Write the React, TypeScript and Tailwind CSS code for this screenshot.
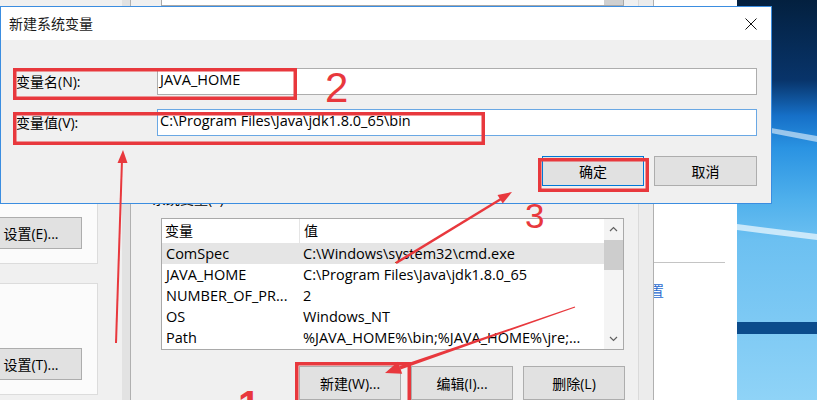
import React from "react";

const RED = "#e8383d";

const rows: { name: string; value: string; selected?: boolean }[] = [
	{ name: "ComSpec", value: "C:\\Windows\\system32\\cmd.exe", selected: true },
	{ name: "JAVA_HOME", value: "C:\\Program Files\\Java\\jdk1.8.0_65" },
	{ name: "NUMBER_OF_PR...", value: "2" },
	{ name: "OS", value: "Windows_NT" },
	{ name: "Path", value: "%JAVA_HOME%\\bin;%JAVA_HOME%\\jre;..." },
];

const WinButton: React.FC<{ label: string; className?: string }> = ({ label, className = "" }) => (
	<div
		className={`flex items-center justify-center border border-[#adadad] bg-[#e1e1e1] text-[14px] text-black ${className}`}
	>
		{label}
	</div>
);

// light streaks of the win10 wallpaper
const Wallpaper = () => (
	<svg width="80" height="400" viewBox="0 0 80 400" className="block">
		<polygon points="34,128 80,136 80,142 34,133" fill="#ffffff" opacity="0.55" />
		<polygon points="0,224 80,234 80,240 0,230" fill="#ffffff" opacity="0.65" />
		<rect x="0" y="322" width="80" height="12" fill="#0b4c8c" />
	</svg>
);

const Annotations = () => (
	<svg width="817" height="400" viewBox="0 0 817 400" className="pointer-events-none absolute left-0 top-0">
		{/* boxes */}
		<rect x="14.75" y="69.75" width="280.5" height="28.5" fill="none" stroke={RED} strokeWidth="3.5" />
		<rect x="14.75" y="113.75" width="468.5" height="29.5" fill="none" stroke={RED} strokeWidth="3.5" />
		<rect x="539.75" y="159.75" width="107.5" height="30.5" fill="none" stroke={RED} strokeWidth="3.5" />
		<rect x="296.75" y="363.75" width="112.5" height="60" fill="none" stroke={RED} strokeWidth="3.5" />

		{/* numbers */}
		<text x="325" y="102" fontFamily="Liberation Sans" fontSize="42" fill={RED}>
			2
		</text>
		<text x="525" y="228" fontFamily="Liberation Sans" fontSize="35" fill={RED}>
			3
		</text>
		<text x="238" y="419" fontFamily="Liberation Sans" fontWeight="bold" fontSize="40" fill={RED}>
			1
		</text>

		{/* arrow to value box */}
		<line x1="116" y1="343" x2="122" y2="160" stroke={RED} strokeWidth="2" />
		<polygon points="123,150 117.5,163 127.5,163" fill={RED} />

		{/* arrow to OK */}
		<line x1="396" y1="263" x2="501" y2="199" stroke={RED} strokeWidth="2.5" />
		<polygon points="512,192 502.7,203.6 497.5,195" fill={RED} />

		{/* arrow to New */}
		<polygon points="574.8,306.5 575.2,307.5 400.6,369.4 399.6,366.1" fill={RED} />
		<polygon points="385,373 402.2,373.8 398,361.8" fill={RED} />
	</svg>
);

export default function App() {
	return (
		<div className="relative flex h-[400px] w-[817px] overflow-hidden bg-[#f0f0f0] font-['Open_Sans','Noto_Sans_CJK_SC',sans-serif] text-[14px] text-black">
			{/* system properties window behind */}
			<div className="flex w-[130px] shrink-0">
				<div className="flex w-[122px] flex-col">
					<div className="mt-[150px] h-[114px] w-[98px] border border-l-0 border-[#dcdcdc] bg-[#fbfbfb] pt-[66px]">
						<WinButton label="设置(E)..." className="ml-[-20px] h-[32px] w-[102px]" />
					</div>
					<div className="mt-[19px] h-[112px] w-[98px] border border-l-0 border-[#dcdcdc] bg-[#fbfbfb] pt-[64px]">
						<WinButton label="设置(T)..." className="ml-[-20px] h-[32px] w-[102px]" />
					</div>
				</div>
				<div className="w-[8px] bg-[#e2e2e2]" />
			</div>

			{/* environment variables window behind */}
			<div className="flex w-[524px] shrink-0 border-x border-[#b0b0b0] bg-[#f0f0f0]">
				<div className="flex w-[507px] flex-col">
					<div className="ml-[30px] flex h-[6px] w-[463px] justify-end border-x border-b border-[#a9a9a9] bg-white">
						<div className="w-[19px] bg-[#d0d0d0]" />
					</div>
					<div className="ml-[21px] mt-[184px] h-[18px] leading-[18px]">系统变量(S)</div>
					<div className="ml-[30px] mt-[10px] flex h-[134px] w-[463px] border border-[#a9a9a9] bg-white">
						<div className="flex w-[442px] flex-col text-[14.5px]">
							<div className="flex h-[24px] items-center text-[14px]">
								<div className="flex h-full w-[138px] items-center border-r border-[#e5e5e5] pl-[3px]">变量</div>
								<div className="pl-[4px]">值</div>
							</div>
							{rows.map((r) => (
								<div
									key={r.name}
									className={`flex h-[21px] items-center whitespace-nowrap ${r.selected ? "bg-[#e5e5e5]" : ""}`}
								>
									<div className="w-[138px] pl-[4px]">{r.name}</div>
									<div className="pl-[3px]">{r.value}</div>
								</div>
							))}
						</div>
						<div className="flex w-[19px] flex-col bg-[#f4f4f4]">
							<div className="flex h-[21px] items-center justify-center">
								<svg width="9" height="6" viewBox="0 0 9 6">
									<path d="M1 5 L4.5 1.5 L8 5" fill="none" stroke="#606060" strokeWidth="1.2" />
								</svg>
							</div>
							<div className="h-[30px] bg-[#cdcdcd]" />
							<div className="flex-1" />
							<div className="flex h-[21px] items-center justify-center">
								<svg width="9" height="6" viewBox="0 0 9 6">
									<path d="M1 1 L4.5 4.5 L8 1" fill="none" stroke="#606060" strokeWidth="1.2" />
								</svg>
							</div>
						</div>
					</div>
					<div className="ml-[168px] mt-[16px] flex gap-[10px]">
						<WinButton label="新建(W)..." className="h-[34px] w-[102px]" />
						<WinButton label="编辑(I)..." className="h-[34px] w-[102px]" />
						<WinButton label="删除(L)" className="h-[34px] w-[102px]" />
					</div>
				</div>
				<div className="w-[15px] border-l border-[#dadada] bg-[#ececec]" />
			</div>

			{/* control panel behind */}
			<div className="flex w-[83px] shrink-0 flex-col overflow-hidden bg-white">
				<div className="mt-[262px] h-px w-[71px] bg-[#c4c4c4]" />
				<div className="ml-[-74px] mt-[19px] h-[18px] whitespace-nowrap leading-[18px] text-[#2b6cd0]">
					高级系统设置
				</div>
			</div>

			{/* desktop */}
			<div className="w-[80px] shrink-0 bg-[linear-gradient(to_bottom,#03203f_0%,#08346a_20%,#1670c8_29%,#2a93e2_37%,#4fb0ec_50%,#6cc0f1_60%,#7dc9f4_80%,#8fd3f7_100%)]">
				<Wallpaper />
			</div>

			{/* new system variable dialog */}
			<div className="absolute left-0 top-[6px] flex h-[198px] w-[772px] flex-col border border-[#3b8de0] bg-[#f0f0f0]">
				<div className="flex h-[33px] items-center bg-white pl-[8px] pr-[14px]">
					<span className="text-[14px] text-[#1a1a1a]">新建系统变量</span>
					<svg width="12" height="12" viewBox="0 0 12 12" className="ml-auto">
						<path d="M0.5 0.5 L11.5 11.5 M11.5 0.5 L0.5 11.5" stroke="#111" strokeWidth="1" />
					</svg>
				</div>
				<div className="flex flex-1 flex-col pl-[15px] pr-[14px] pt-[28px]">
					<div className="flex h-[27px] items-center">
						<div className="w-[141px]">变量名(N):</div>
						<div className="h-[27px] w-[600px] border border-[#adadad] bg-white pl-[2px] text-[14.5px] leading-[22px]">
							JAVA_HOME
						</div>
					</div>
					<div className="mt-[14px] flex h-[27px] items-center">
						<div className="w-[141px]">变量值(V):</div>
						<div className="h-[27px] w-[600px] border border-[#6aa8e4] bg-white pl-[2px] text-[14.5px] leading-[22px]">
							C:\Program Files\Java\jdk1.8.0_65\bin
						</div>
					</div>
					<div className="mt-[20px] flex justify-end gap-[10px]">
						<WinButton label="确定" className="h-[30px] w-[102px] !border-[#0078d7]" />
						<WinButton label="取消" className="h-[30px] w-[103px]" />
					</div>
				</div>
			</div>

			<Annotations />
		</div>
	);
}
